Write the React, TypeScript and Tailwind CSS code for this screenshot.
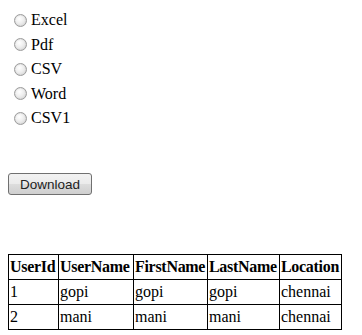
const formats = ['Excel', 'Pdf', 'CSV', 'Word', 'CSV1'];

const users = [
  { id: '1', userName: 'gopi', firstName: 'gopi', lastName: 'gopi', location: 'chennai' },
  { id: '2', userName: 'mani', firstName: 'mani', lastName: 'mani', location: 'chennai' },
];

function Radio() {
  return (
    <span className="inline-block w-[13px] h-[13px] rounded-full border border-[#9c9c9c] bg-[radial-gradient(circle_at_40%_35%,#ffffff_0%,#eeeeee_45%,#cfcfcf_100%)] shadow-[inset_0_0_1px_#bbbbbb]" />
  );
}

export default function App() {
  return (
    <div className="bg-white text-black text-[16px] font-['Liberation_Serif','Times_New_Roman',serif] w-[362px] h-[335px] overflow-hidden">
      <div className="pt-[8px] pl-[14px]">
        {formats.map(f => (
          <label key={f} className="flex items-center gap-[4px] h-[24.5px]">
            <Radio />
            <span>{f}</span>
          </label>
        ))}
      </div>

      <div className="pl-[8px] mt-[41px]">
        <button className="w-[84px] h-[22px] rounded-[3px] border border-[#707070] bg-[linear-gradient(#f2f2f2,#ebebeb_50%,#dddddd_50%,#cfcfcf)] text-[13.5px] text-[#222] font-['Liberation_Sans',Arial,sans-serif] leading-none">
          Download
        </button>
      </div>

      <div className="pl-[8px] mt-[58px]">
        <table className="border-collapse border border-black table-fixed w-[333px] whitespace-nowrap">
          <colgroup>
            <col className="w-[50px]" />
            <col className="w-[75px]" />
            <col className="w-[74px]" />
            <col className="w-[72px]" />
            <col className="w-[62px]" />
          </colgroup>
          <thead>
            <tr className="h-[23px]">
              {['UserId', 'UserName', 'FirstName', 'LastName', 'Location'].map(h => (
                <th key={h} className="border border-black px-[1px] py-0 text-left font-bold tracking-[-0.3px] overflow-hidden">
                  {h}
                </th>
              ))}
            </tr>
          </thead>
          <tbody>
            {users.map((u, i) => (
              <tr key={u.id} className={i === 1 ? 'h-[24px]' : 'h-[23px]'}>
                <td className="border border-black px-[1px] py-0">{u.id}</td>
                <td className="border border-black px-[1px] py-0">{u.userName}</td>
                <td className="border border-black px-[1px] py-0">{u.firstName}</td>
                <td className="border border-black px-[1px] py-0">{u.lastName}</td>
                <td className="border border-black px-[1px] py-0">{u.location}</td>
              </tr>
            ))}
          </tbody>
        </table>
      </div>
    </div>
  );
}
